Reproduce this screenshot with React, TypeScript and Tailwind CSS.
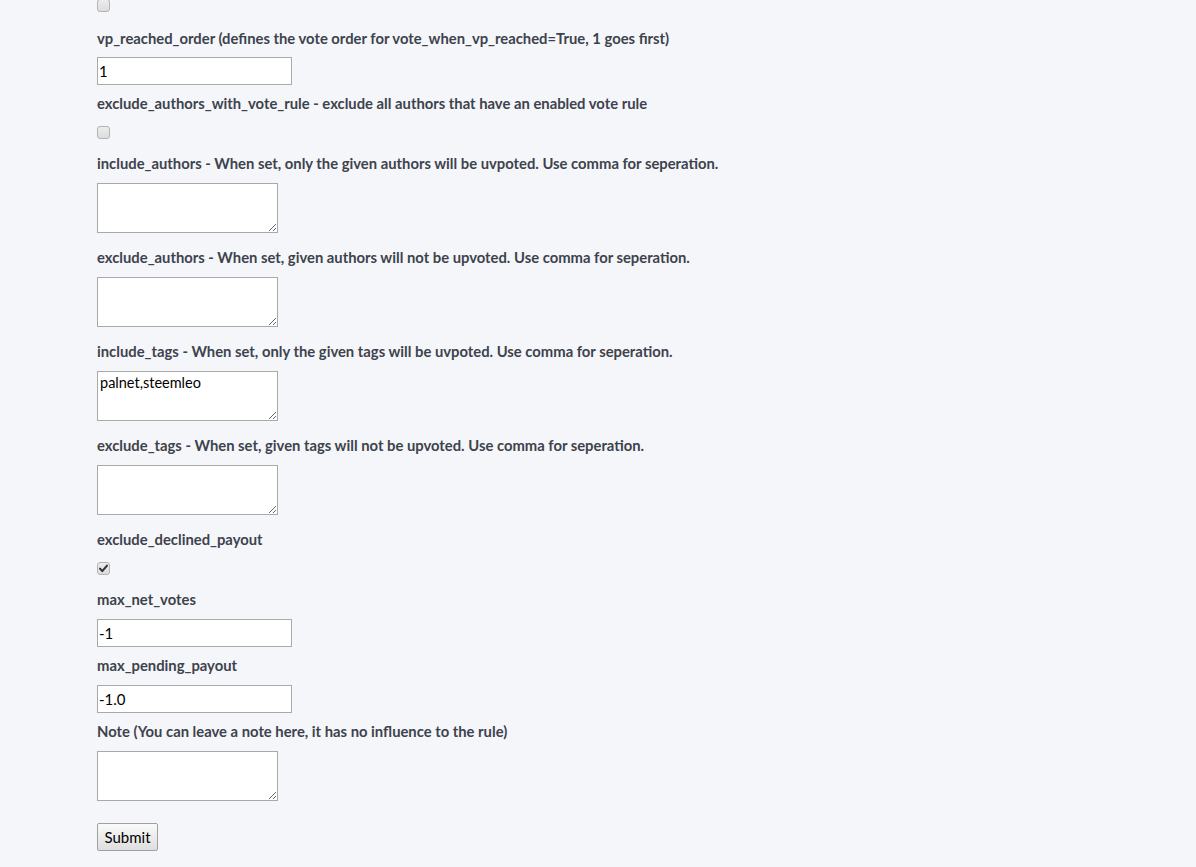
import React from "react";

type Item =
  | { kind: "label"; text: string; mt: string }
  | { kind: "check"; checked?: boolean; mt: string }
  | { kind: "input"; value: string; mt: string }
  | { kind: "area"; value?: string; mt: string }
  | { kind: "submit"; mt: string };

const items: Item[] = [
  { kind: "check", mt: "-mt-px" },
  { kind: "label", text: "vp_reached_order (defines the vote order for vote_when_vp_reached=True, 1 goes first)", mt: "mt-4" },
  { kind: "input", value: "1", mt: "mt-[9px]" },
  { kind: "label", text: "exclude_authors_with_vote_rule - exclude all authors that have an enabled vote rule", mt: "mt-2" },
  { kind: "check", mt: "mt-[13px]" },
  { kind: "label", text: "include_authors - When set, only the given authors will be uvpoted. Use comma for seperation.", mt: "mt-[14px]" },
  { kind: "area", mt: "mt-[10px]" },
  { kind: "label", text: "exclude_authors - When set, given authors will not be upvoted. Use comma for seperation.", mt: "mt-[14px]" },
  { kind: "area", mt: "mt-[10px]" },
  { kind: "label", text: "include_tags - When set, only the given tags will be uvpoted. Use comma for seperation.", mt: "mt-[14px]" },
  { kind: "area", value: "palnet,steemleo", mt: "mt-[10px]" },
  { kind: "label", text: "exclude_tags - When set, given tags will not be upvoted. Use comma for seperation.", mt: "mt-[14px]" },
  { kind: "area", mt: "mt-[10px]" },
  { kind: "label", text: "exclude_declined_payout", mt: "mt-[14px]" },
  { kind: "check", checked: true, mt: "mt-[13px]" },
  { kind: "label", text: "max_net_votes", mt: "mt-[14px]" },
  { kind: "input", value: "-1", mt: "mt-[10px]" },
  { kind: "label", text: "max_pending_payout", mt: "mt-2" },
  { kind: "input", value: "-1.0", mt: "mt-[10px]" },
  { kind: "label", text: "Note (You can leave a note here, it has no influence to the rule)", mt: "mt-2" },
  { kind: "area", mt: "mt-[10px]" },
  { kind: "submit", mt: "mt-[22px]" },
];

function Check({ checked, mt }: { checked?: boolean; mt: string }) {
  return (
    <span className={`relative block w-[13px] h-[13px] ${mt}`}>
      <input
        type="checkbox"
        defaultChecked={checked}
        className="peer block m-0 w-[13px] h-[13px] appearance-none rounded-[3px] border border-[#b4b4b4] bg-gradient-to-b from-[#ededed] to-[#dcdcdc]"
      />
      <svg
        viewBox="0 0 13 13"
        className="pointer-events-none absolute left-0 top-0 hidden w-[13px] h-[13px] peer-checked:block"
      >
        <path d="M3 6.6 L5.3 9.2 L10 3.6" fill="none" stroke="#333" strokeWidth="2" strokeLinecap="round" strokeLinejoin="round" />
      </svg>
    </span>
  );
}

function Row({ item }: { item: Item }) {
  switch (item.kind) {
    case "label":
      return (
        <label
          className={`block h-[20px] leading-[20px] text-[14.8px] font-bold text-[#3d434c] whitespace-nowrap [font-family:Lato,'Noto_Sans',sans-serif] ${item.mt}`}
        >
          {item.text}
        </label>
      );
    case "check":
      return <Check checked={item.checked} mt={item.mt} />;
    case "input":
      return (
        <input
          type="text"
          defaultValue={item.value}
          className={`block w-[195px] h-[28px] bg-white border border-[#a9a9a9] px-[1px] text-[15px] text-black [font-family:Lato,sans-serif] outline-none ${item.mt}`}
        />
      );
    case "area":
      return (
        <textarea
          defaultValue={item.value}
          className={`block w-[181px] h-[50px] bg-white border border-[#a9a9a9] p-[2px] text-[14.5px] leading-[18px] text-black [font-family:Lato,sans-serif] outline-none ${item.mt}`}
        />
      );
    case "submit":
      return (
        <button
          type="submit"
          className={`block w-[61px] h-[28px] rounded-[2px] border border-[#a0a0a0] bg-gradient-to-b from-[#fafafa] to-[#dedede] text-[15px] text-black [font-family:Lato,sans-serif] ${item.mt}`}
        >
          Submit
        </button>
      );
  }
}

export default function App() {
  return (
    <div className="min-h-[867px] w-full bg-[#f5f6fa] overflow-hidden">
      <form className="flex flex-col items-start pl-[97px]" onSubmit={(e) => e.preventDefault()}>
        {items.map((it, i) => (
          <Row key={i} item={it} />
        ))}
      </form>
    </div>
  );
}
